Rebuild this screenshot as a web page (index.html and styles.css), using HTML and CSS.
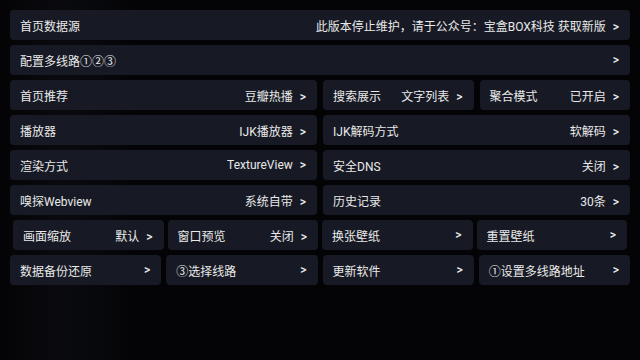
FILE: index.html
```html
<!DOCTYPE html>
<html lang="zh-CN">
<head>
<meta charset="utf-8">
<link rel="stylesheet" href="styles.css">
</head>
<body>
<div class="page">
  <div class="card">
    <span class="label">首页数据源</span>
    <span class="value">此版本停止维护，请于公众号：宝盒BOX科技 获取新版<span class="arrow">&gt;</span></span>
  </div>
  <div class="card">
    <span class="label">配置多线路①②③</span>
    <span class="arrow">&gt;</span>
  </div>
  <div class="row halves">
    <div class="card">
      <span class="label">首页推荐</span>
      <span class="value">豆瓣热播<span class="arrow">&gt;</span></span>
    </div>
    <div class="pair">
      <div class="card">
        <span class="label">搜索展示</span>
        <span class="value">文字列表<span class="arrow">&gt;</span></span>
      </div>
      <div class="card">
        <span class="label">聚合模式</span>
        <span class="value">已开启<span class="arrow">&gt;</span></span>
      </div>
    </div>
  </div>
  <div class="row halves">
    <div class="card">
      <span class="label">播放器</span>
      <span class="value">IJK播放器<span class="arrow">&gt;</span></span>
    </div>
    <div class="card">
      <span class="label">IJK解码方式</span>
      <span class="value">软解码<span class="arrow">&gt;</span></span>
    </div>
  </div>
  <div class="row halves">
    <div class="card">
      <span class="label">渲染方式</span>
      <span class="value">TextureView<span class="arrow">&gt;</span></span>
    </div>
    <div class="card">
      <span class="label">安全DNS</span>
      <span class="value">关闭<span class="arrow">&gt;</span></span>
    </div>
  </div>
  <div class="row halves">
    <div class="card">
      <span class="label">嗅探Webview</span>
      <span class="value">系统自带<span class="arrow">&gt;</span></span>
    </div>
    <div class="card">
      <span class="label">历史记录</span>
      <span class="value">30条<span class="arrow">&gt;</span></span>
    </div>
  </div>
  <div class="row quarters inset">
    <div class="card">
      <span class="label">画面缩放</span>
      <span class="value">默认<span class="arrow">&gt;</span></span>
    </div>
    <div class="card">
      <span class="label">窗口预览</span>
      <span class="value">关闭<span class="arrow">&gt;</span></span>
    </div>
    <div class="card">
      <span class="label">换张壁纸</span>
      <span class="arrow">&gt;</span>
    </div>
    <div class="card">
      <span class="label">重置壁纸</span>
      <span class="arrow">&gt;</span>
    </div>
  </div>
  <div class="row quarters">
    <div class="card">
      <span class="label">数据备份还原</span>
      <span class="arrow">&gt;</span>
    </div>
    <div class="card">
      <span class="label">③选择线路</span>
      <span class="arrow">&gt;</span>
    </div>
    <div class="card">
      <span class="label">更新软件</span>
      <span class="arrow">&gt;</span>
    </div>
    <div class="card">
      <span class="label">①设置多线路地址</span>
      <span class="arrow">&gt;</span>
    </div>
  </div>
</div>
</body>
</html>
```

FILE: styles.css
```css
html, body {
  margin: 0;
  padding: 0;
}
body {
  width: 640px;
  height: 360px;
  overflow: hidden;
  background:
    linear-gradient(90deg, rgba(0,0,0,0) 0, rgba(14,15,22,0.55) 60px, rgba(8,9,14,0.6) 110px, rgba(0,0,0,0) 135px),
    #040406;
  font-family: Roboto, "Noto Sans CJK SC", sans-serif;
  font-size: 12px;
  color: #e9e9e9;
}
.page {
  padding: 10px;
  display: flex;
  flex-direction: column;
  gap: 5px;
}
.card {
  height: 30px;
  box-sizing: border-box;
  background: #171a24;
  border-radius: 4px;
  display: flex;
  align-items: center;
  justify-content: space-between;
  padding: 0 11px 0 10px;
  white-space: nowrap;
  min-width: 0;
}
.label {
  color: #e9e9e9;
}
.value {
  color: #e9e9e9;
}
.arrow {
  font-weight: 500;
}
.value .arrow {
  margin-left: 7px;
}
.row {
  display: grid;
}
.halves {
  grid-template-columns: 1fr 1fr;
  column-gap: 6px;
}
.pair {
  display: grid;
  grid-template-columns: 1fr 1fr;
  column-gap: 6px;
}
.quarters {
  grid-template-columns: repeat(4, 1fr);
  column-gap: 5px;
}
.inset {
  padding: 0 3px;
  column-gap: 4px;
}
```
